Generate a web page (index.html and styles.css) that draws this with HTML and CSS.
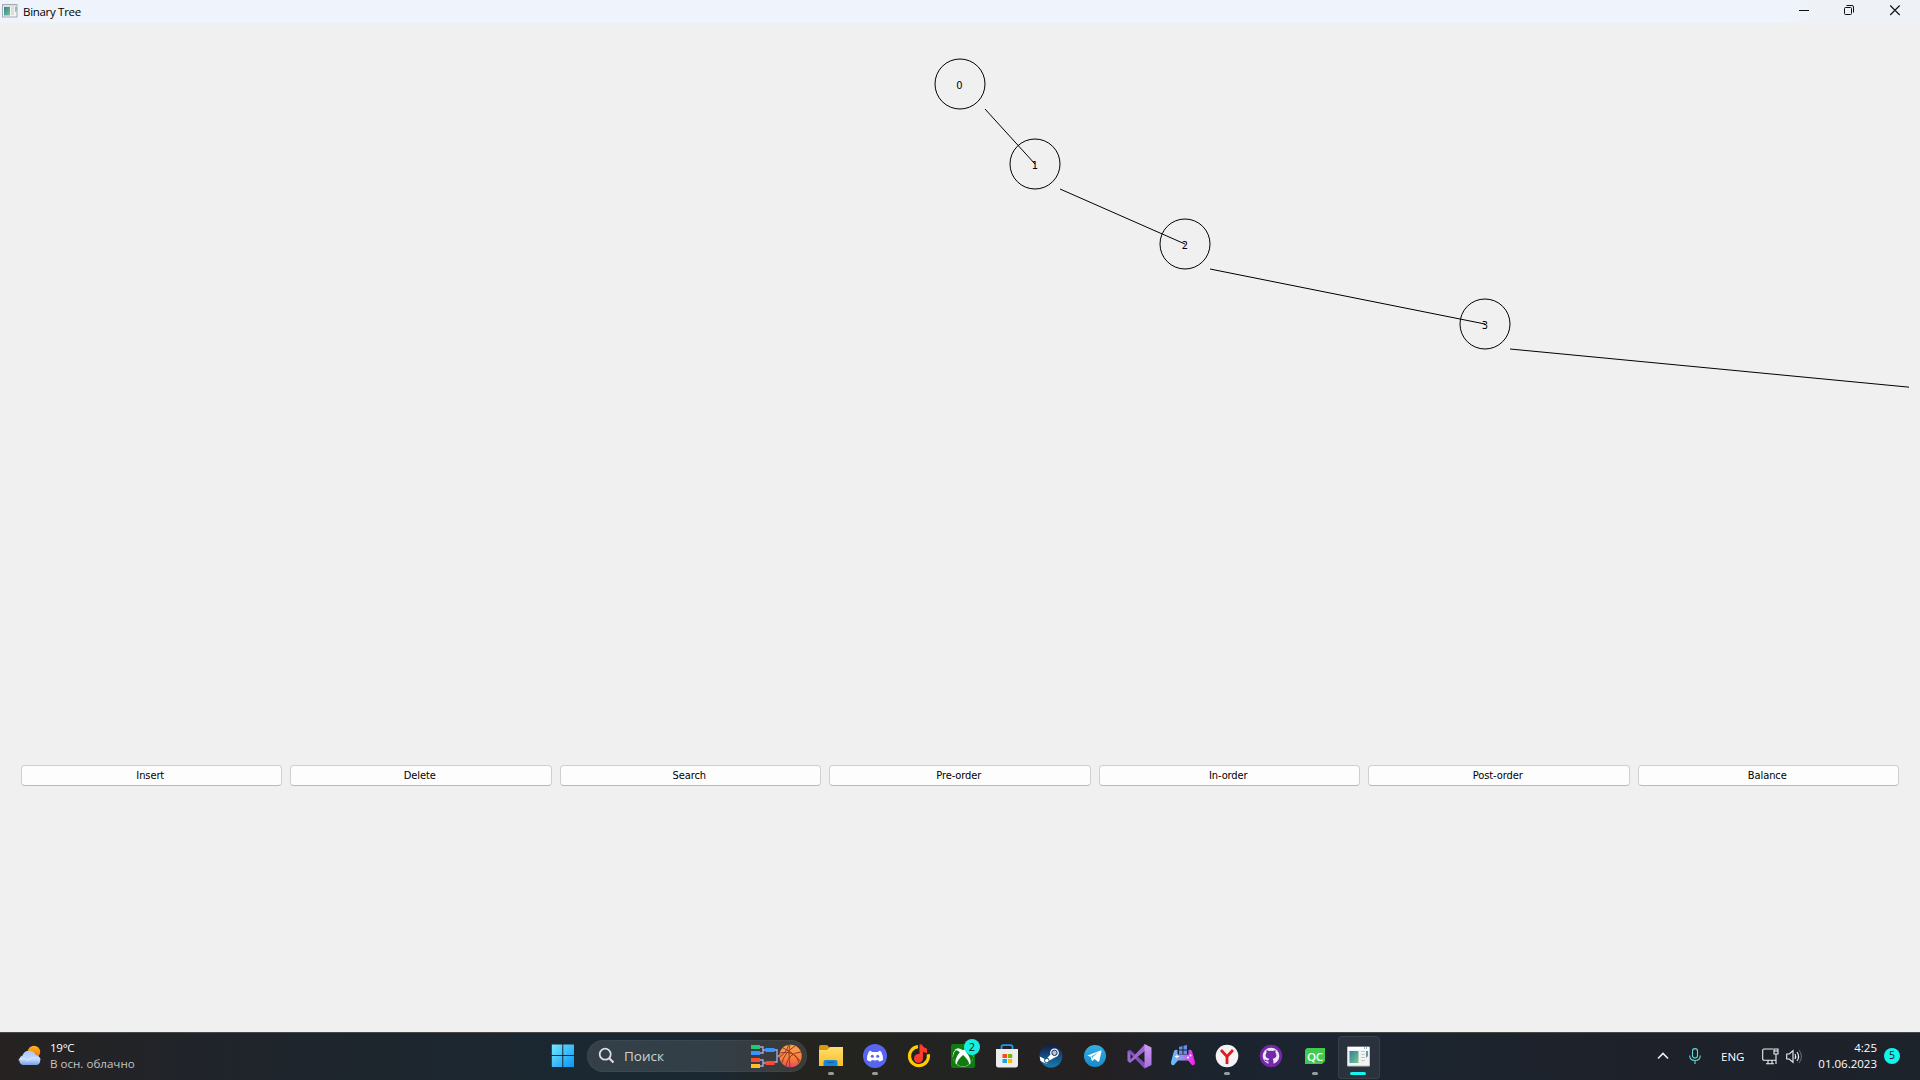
FILE: index.html
```html
<!DOCTYPE html>
<html lang="ru">
<head>
<meta charset="utf-8">
<title>Binary Tree</title>
<link rel="stylesheet" href="styles.css">
</head>
<body>
<div class="window">
  <header class="titlebar">
    <svg class="app-icon" width="16" height="14" viewBox="0 0 16 14"><rect x=".5" y=".5" width="14.500" height="12.500" fill="#f4f4f4" stroke="#a5a8ad"/><path d="M1 2h14" stroke="#c9ccd1"/><rect x="2" y="3" width="6" height="8.500" fill="url(#shot)"/><path d="M9 3h3v8H9z" fill="#ddd"/><path d="M13 3h2v4l-2 1z" fill="#8fbfae"/></svg>
    <h1 class="title">Binary Tree</h1>
    <div class="controls">
      <svg width="46" height="22" viewBox="0 0 46 22"><path d="M18 10.500h10" stroke="#111"/></svg>
      <svg width="46" height="22" viewBox="0 0 46 22" fill="none" stroke="#111"><rect x="17.500" y="7.500" width="7" height="7" rx="1"/><path d="M19.500 5.500H25q1.500 0 1.500 1.500v5.500"/></svg>
      <svg width="46" height="22" viewBox="0 0 46 22"><path d="m17.200 5.500 9.500 9.500m0-9.500L17.200 15" stroke="#111" stroke-width="1.100"/></svg>
    </div>
  </header>
  <main class="content">
    <svg class="tree" width="1909" height="742" viewBox="0 23 1909 742">
      <g class="shape">
        <circle cx="960" cy="84" r="25"/><circle cx="1035" cy="164" r="25"/><circle cx="1185" cy="244" r="25"/><circle cx="1485" cy="324" r="25"/>
        <path d="M985 109 1035 164M1060 189 1185 244M1210 269 1485 324M1510 349 2085 404"/>
      </g>
      <g class="label"><text x="959.500" y="89">0</text><text x="1035" y="169">1</text><text x="1185" y="249">2</text><text x="1485" y="329">3</text></g>
    </svg>
    <div class="actions">
      <button>Insert</button><button>Delete</button><button>Search</button><button>Pre-order</button><button>In-order</button><button>Post-order</button><button>Balance</button>
    </div>
  </main>
</div>
<footer class="taskbar">
  <div class="weather">
    <svg width="26" height="24" viewBox="0 0 26 24"><circle cx="17" cy="8" r="6.200" fill="url(#sun)"/><path d="M6 21a5 5 0 0 1-.5-9.500A7 7 0 0 1 18.500 11 5.200 5.200 0 0 1 20 21z" fill="url(#cloud)"/><path d="M1.500 16q5-4 9 1 5-6 13-2" fill="none" stroke="#dbe8ff" stroke-width="1"/></svg>
    <div><div class="temp">19°C</div><div class="sky">В осн. облачно</div></div>
  </div>
  <div class="slot start"><svg width="24" height="24" viewBox="0 0 24 24"><path d="M.8.500H11.300V11H.8zM12.300.500H23V11H12.300zM.8 12H11.300v11H.8zM12.300 12H23v11H12.300z" fill="url(#win)"/></svg></div>
  <div class="search">
    <svg width="17" height="17" viewBox="0 0 17 17" fill="none" stroke="#ddd" stroke-width="1.800"><circle cx="7.200" cy="7.200" r="5.500"/><path d="m11 11 4.500 4.500" stroke-width="2.200"/></svg>
    <span>Поиск</span>
    <svg class="doodle" width="51" height="24" viewBox="0 0 51 24"><path d="M9 3h3v6H9m3-3h3M9 16h3v6H9m3-3h3M23 6h3v12h-3m3-6h3" fill="none" stroke="#aaa3df" stroke-width="1.400"/><path fill="#1ecb74" d="M0 1h9v4H0z"/><path fill="#3696ff" d="M0 7h9v4H0zM14.500 4h9v4h-9z"/><path fill="#ff4832" d="M0 14h9v4H0zM14.500 17h9v4h-9z"/><path fill="#ffbd29" d="M0 20h9v4H0z"/><circle cx="39.500" cy="12" r="11.200" fill="url(#ball)"/><path d="M29 9q13-3 20 8M32 4q14 6 16 15M44 2q-11 7-13 17M50 8q-13 1-15 14M39 1q-2 5 0 22M28.500 13q7-4 9-12" stroke="#91362c" fill="none"/></svg>
  </div>
  <nav class="apps">
    <div class="slot running"><svg width="26" height="24" viewBox="0 0 26 24"><path d="M1 3q0-2 2-2h6l3 3v5H1z" fill="#d99713"/><path d="M1 6h8l3-3h13v19H1z" fill="url(#folder)"/><path d="M5.500 22v-4q0-2 2-2h10q2 0 2 2v4z" fill="#1986d5"/><path d="M9 18.500h7" stroke="#0c5fa8"/></svg></div>
    <div class="slot running"><svg width="24" height="24" viewBox="0 0 24 24"><circle cx="12" cy="12" r="12" fill="#5865f2"/><path d="M8 6.800Q6.500 7 5.800 7.800 3.800 11.500 4 16q1.700 1.400 3.800 1.600L8.900 16q3.100.8 6.200 0l1.100 1.600Q18.300 17.400 20 16q.2-4.500-1.800-8.200Q17.500 7 16 6.800L15.200 8H8.800z" fill="#fff"/><circle cx="9.300" cy="12.300" r="1.500" fill="#5865f2"/><circle cx="14.700" cy="12.300" r="1.500" fill="#5865f2"/></svg></div>
    <div class="slot"><svg width="24" height="24" viewBox="0 0 24 24"><path d="M11 2.600a9.500 9.500 0 1 0 10.300 7.700" fill="none" stroke="#ffcc00" stroke-width="3.200"/><path d="M12.500.5h2.500q1 3 5 4v4.500q-3-.3-4-1.500v7a4.500 4.500 0 1 1-3.500-4.500z" fill="#ff3b2f"/></svg></div>
    <div class="slot"><svg width="24" height="24" viewBox="0 0 24 24"><rect width="24" height="24" rx="2" fill="#107c10"/><circle cx="12" cy="12.500" r="10.300" fill="#fff"/><path d="M5 4.500Q8 3.500 12 6.300 16 3.500 19 4.500L17 2H7zM8.800 8.200Q3.600 14.500 4.600 19.500L3.800 19Q-.5 12 4.800 6.300 6.500 6 8.800 8.200M15.200 8.200Q20.400 14.500 19.400 19.500l.8-.5q4.300-7-1-12.700-1.700-.3-4 1.900M12 11q5.500 4.700 6.300 9.300-6.300 4.500-12.600 0Q6.500 15.700 12 11" fill="#107c10"/></svg><span class="badge">2</span></div>
    <div class="slot"><svg width="24" height="24" viewBox="0 0 24 24"><path d="M6.500 7V3q0-1.800 1.800-1.800h7.400q1.800 0 1.800 1.800v4" fill="none" stroke="#1d9cec" stroke-width="1.800"/><path d="M1 5h22v16q0 2.500-2.500 2.500h-17Q1 23.500 1 21z" fill="#ededed"/><path d="M7.500 10H12v4H7.500z" fill="#f04f24"/><path d="M13 10h4.200v4H13z" fill="#79b900"/><path d="M7.500 15H12v4H7.500z" fill="#18a4ec"/><path d="M13 15h4.200v4H13z" fill="#ffb900"/></svg></div>
    <div class="slot"><svg width="24" height="24" viewBox="0 0 24 24"><circle cx="12" cy="12" r="11.500" fill="url(#steam)"/><path d="m.7 12.500 6 3L11 11l5-2.500.5 4.500-6 3.500q-1.500 4-5 2.500l-4-2z" fill="#fff"/><circle cx="15.500" cy="8.800" r="4.400" fill="#fff"/><circle cx="15.500" cy="8.800" r="2.700" fill="#b9c4d1" stroke="#123052"/><circle cx="7.800" cy="16.500" r="2.300" fill="none" stroke="#175176"/></svg></div>
    <div class="slot"><svg width="24" height="24" viewBox="0 0 24 24"><circle cx="12" cy="12" r="11" fill="url(#telegram)"/><path d="m4.500 11.500 13-5q1.300-.4 1 1L16.300 17q-.3 1.300-1.500.5l-3.300-2.400-1.800 1.700q-.8.500-1-.5l-1-3.500-3.200-1q-.6-.2 0-.3m4 1 .8 2.500.3-2 6-5.300z" fill="#fff"/></svg></div>
    <div class="slot"><svg width="25" height="25" viewBox="0 0 25 25"><path d="M.5 7 3 5.800l15.500 14-1 4.700z" fill="#8050bd"/><path d="M.5 17V7l3 2.500v6L18 0l1 6L3 19z" fill="#9b68d2"/><path d="m17.500 0 7 3.500V21l-7 3.500z" fill="url(#vs)"/></svg></div>
    <div class="slot"><svg width="26" height="24" viewBox="0 0 26 24"><path d="m9 3 3.500-1v3.500H9zm4.500-1.200L17 1v4.500h-3.500zM9 6.500h3.500V10H9zm4.500 0H17V10h-3.500z" fill="#658ee9"/><path d="M4 7q1.500-2 3.500-1v4.500h11V6q2-1 3.500 1l3 11q0 4-3 3l-4-4.500H8L4 21q-3 1-3-3z" fill="url(#pad)"/><path d="M5 12.500h4m-2-2v4" stroke="#fff"/><circle cx="18" cy="13.500" r="1" fill="#fff"/><circle cx="20.500" cy="11.500" r="1" fill="#fff"/></svg></div>
    <div class="slot running"><svg width="24" height="24" viewBox="0 0 24 24"><circle cx="12" cy="12" r="11.300" fill="#f4f4f4"/><path d="m6 6 6 6.500V20m0-7.500L18 6" fill="none" stroke="#e01c22" stroke-width="2.800"/></svg></div>
    <div class="slot"><svg width="24" height="24" viewBox="0 0 24 24"><circle cx="12" cy="12" r="11.200" fill="#7428a8"/><circle cx="12" cy="12" r="8.300" fill="#efe7f6"/><path d="M9.500 20.500v-3q-3.500.5-4.300-2 2 .1 2.500 1l1.800-.2.700-1.500Q6.500 14 6.500 11L7.500 8.700V6l2.500 1q2-.5 4 0l2.500-1v2.700l1 2.300q0 3-3.700 3.800.7 1 .7 5.700z" fill="#7428a8"/></svg></div>
    <div class="slot running"><svg width="22" height="18" viewBox="0 0 22 18"><path d="M3 1h18v13l-3 3H1V3z" fill="#3ecb50"/><text class="qc" x="11" y="13.500">QC</text></svg></div>
    <div class="slot active"><svg width="23" height="21" viewBox="0 0 23 21"><path d="M.5 1h22v19H.5z" fill="#f3f3f3" stroke="#bfc4c9"/><path d="M1 2.500h21" stroke="#fff" stroke-width="3"/><path d="M17 2h1m1 0h1" stroke="#2678ba"/><path d="M2.500 5h9v12h-9z" fill="url(#shot)"/><path d="M14 5.500h4m-4 3h4m-4 3h4m-4 3h4" stroke="#c4c7cb"/><path d="M19 5h2v5l-2 2z" fill="#629c9b"/></svg></div>
  </nav>
  <div class="tray">
    <svg width="12" height="8" viewBox="0 0 12 8"><path d="m1 6.500 5-5 5 5" fill="none" stroke="#eee" stroke-width="1.600"/></svg>
    <svg class="mic" width="12" height="16" viewBox="0 0 12 16" fill="none" stroke="#65d8d1" stroke-width="1.100"><rect x="3.500" y=".6" width="5" height="9.500" rx="2.500"/><path d="M.7 7.500q0 5 5.300 5t5.300-5M6 12.500V16"/></svg>
    <span class="lang">ENG</span>
    <svg class="net" width="17" height="17" viewBox="0 0 17 17" fill="none" stroke="#eee" stroke-width="1.100"><path d="M11 1H2Q.7 1 .7 2.300V11q0 1.300 1.300 1.300h11.500M4 15.800h8M6 12.500v3m4-3v3M12 1h4v5h-4zM14 6v10"/><path d="M12 3h4"/></svg>
    <svg class="vol" width="17" height="15" viewBox="0 0 17 15" fill="none" stroke="#eee" stroke-width="1.100"><path d="M.7 5v5h2.500L7 13.200V1.800L3.200 5zM9 5q1.500 2.500 0 5M11 3q3.200 4.500 0 9"/><path d="M13 1q5 6.500 0 13" stroke="#62666c"/></svg>
    <div class="clock"><div>4:25</div><div>01.06.2023</div></div>
    <span class="count">5</span>
  </div>
</footer>
<svg class="defs" width="0" height="0"><defs>
  <linearGradient id="shot" x1="0" y1="0" x2="1" y2="1"><stop stop-color="#347ba3"/><stop offset="1" stop-color="#77c989"/></linearGradient>
  <linearGradient id="sun" x1="0" y1="0" x2="0" y2="1"><stop stop-color="#ffb31e"/><stop offset="1" stop-color="#ed7408"/></linearGradient>
  <linearGradient id="cloud" x1="0" y1="0" x2="0" y2="1"><stop stop-color="#a8c8fb"/><stop offset=".6" stop-color="#c4d9ff"/><stop offset="1" stop-color="#769ee4"/></linearGradient>
  <linearGradient id="win" x1="0" y1="0" x2="1" y2="1"><stop stop-color="#74e9ff"/><stop offset="1" stop-color="#0993f4"/></linearGradient>
  <linearGradient id="ball" x1="0" y1="0" x2="0" y2="1"><stop stop-color="#ffa74b"/><stop offset=".7" stop-color="#f67839"/><stop offset="1" stop-color="#e9476b"/></linearGradient>
  <linearGradient id="folder" x1="0" y1="0" x2="0" y2="1"><stop stop-color="#ffdf6c"/><stop offset="1" stop-color="#f8bd2c"/></linearGradient>
  <linearGradient id="steam" x1="0" y1="0" x2="0" y2="1"><stop stop-color="#111b46"/><stop offset="1" stop-color="#187db5"/></linearGradient>
  <linearGradient id="telegram" x1="0" y1="0" x2="0" y2="1"><stop stop-color="#36aee2"/><stop offset="1" stop-color="#168acd"/></linearGradient>
  <linearGradient id="vs" x1="0" y1="0" x2="0" y2="1"><stop stop-color="#ce9cf2"/><stop offset="1" stop-color="#a96ee4"/></linearGradient>
  <linearGradient id="pad"><stop stop-color="#59c8fa"/><stop offset=".5" stop-color="#9b8cf1"/><stop offset="1" stop-color="#ff16e9"/></linearGradient>
</defs></svg>
</body>
</html>
```
FILE: styles.css
```css
* { box-sizing: border-box; }
body { margin: 0; width: 1920px; height: 1080px; overflow: hidden; background: #f0f0f0; font-family: "Open Sans", "Noto Sans", sans-serif; display: flex; flex-direction: column; }
svg { display: block; flex: none; }
.defs { position: absolute; }
.window { height: 1032px; }
.titlebar { height: 23px; display: flex; align-items: flex-start; background: linear-gradient(90deg, #eff3fb 0 93%, #eef2f7 95%); }
.app-icon { margin: 4px 0 0 2px; }
.title { margin: 4px 0 0 5px; font-size: 11.500px; line-height: 16px; font-weight: 400; color: #000; letter-spacing: -.3px; }
.controls { display: flex; margin-left: auto; margin-right: 1px; }
.content { height: 1009px; }
.tree { overflow: hidden; }
.shape { fill: none; stroke: #000; stroke-width: 1; }
.label { font: 11px "DejaVu Sans Condensed", "DejaVu Sans", sans-serif; font-stretch: condensed; text-anchor: middle; }
.actions { display: grid; grid-template-columns: repeat(7, 1fr); gap: 8px; padding: 0 21px 0 20.500px; }
.actions button { height: 21px; padding: 1px 2px 0 0; border: 1px solid #d0d0d0; border-bottom-color: #b9b9b9; border-radius: 4px; background: #fdfdfd; color: #000; font: 11px/18px "DejaVu Sans", sans-serif; font-stretch: condensed; letter-spacing: -.1px; }
.taskbar { height: 48px; display: flex; border-top: 1px solid #46484a; background: linear-gradient(90deg, #262221 0, #20242a 10%, #1b2831 30%, #1a2832 37%, #24231f 42%, #222422 50%, #242022 57%, #1b242e 63%, #1c2530 72%, #1e2129 86%, #1d232b 100%); color: #fff; }
.weather { width: 540px; display: flex; padding: 7px 0 0 17px; font-size: 11.600px; line-height: 16px; }
.weather svg { margin: 4px 7px 0 0; }
.sky { color: #c4c4c4; }
.temp { letter-spacing: -.3px; }
.slot { position: relative; width: 44px; height: 46px; display: flex; align-items: center; justify-content: center; }
.start svg { margin-left: 2px; }
.search { width: 220px; height: 32px; margin: 7px 2px 0 3px; padding: 0 4px 1px 10px; border-radius: 16px; background: #ffffff1c; border: 1px solid #ffffff0b; display: flex; align-items: center; font-size: 13.500px; color: #cfd1d3; }
.search span { margin-left: 9px; }
.doodle { margin-left: auto; }
.apps { display: flex; }
.running::after, .active::after { content: ""; position: absolute; left: 19px; bottom: 4px; width: 6px; height: 3px; border-radius: 2px; background: #9a9b9d; }
.active::before { content: ""; position: absolute; left: 1px; top: 3px; width: 40px; height: 41px; border: 1px solid #ffffff12; border-radius: 4px; background: #ffffff10; }
.active::after { left: 13px; width: 16px; background: #13f5ee; }
.active svg { position: relative; margin-right: 2px; }
.badge { position: absolute; left: 23px; top: 6px; width: 16px; height: 16px; border-radius: 50%; background: #16efdf; color: #111; font-size: 11px; line-height: 16px; text-align: center; }
.qc { fill: #fff; font: 600 11.500px "Open Sans", sans-serif; text-anchor: middle; letter-spacing: -.2px; }
.tray { flex: 1; display: flex; justify-content: flex-end; align-items: center; padding: 0 20px 1px 0; font-size: 11.500px; }
.mic { margin-left: 20px; }
.lang { margin: 1px 0 0 20px; width: 24px; font-size: 11.500px; }
.net { margin-left: 17px; }
.vol { margin-left: 7px; }
.clock { width: 74px; text-align: right; line-height: 16px; }
.count { width: 16px; height: 16px; margin-left: 7px; border-radius: 50%; background: #12f5e9; color: #111; text-align: center; font-size: 10.500px; line-height: 15px; }
```
